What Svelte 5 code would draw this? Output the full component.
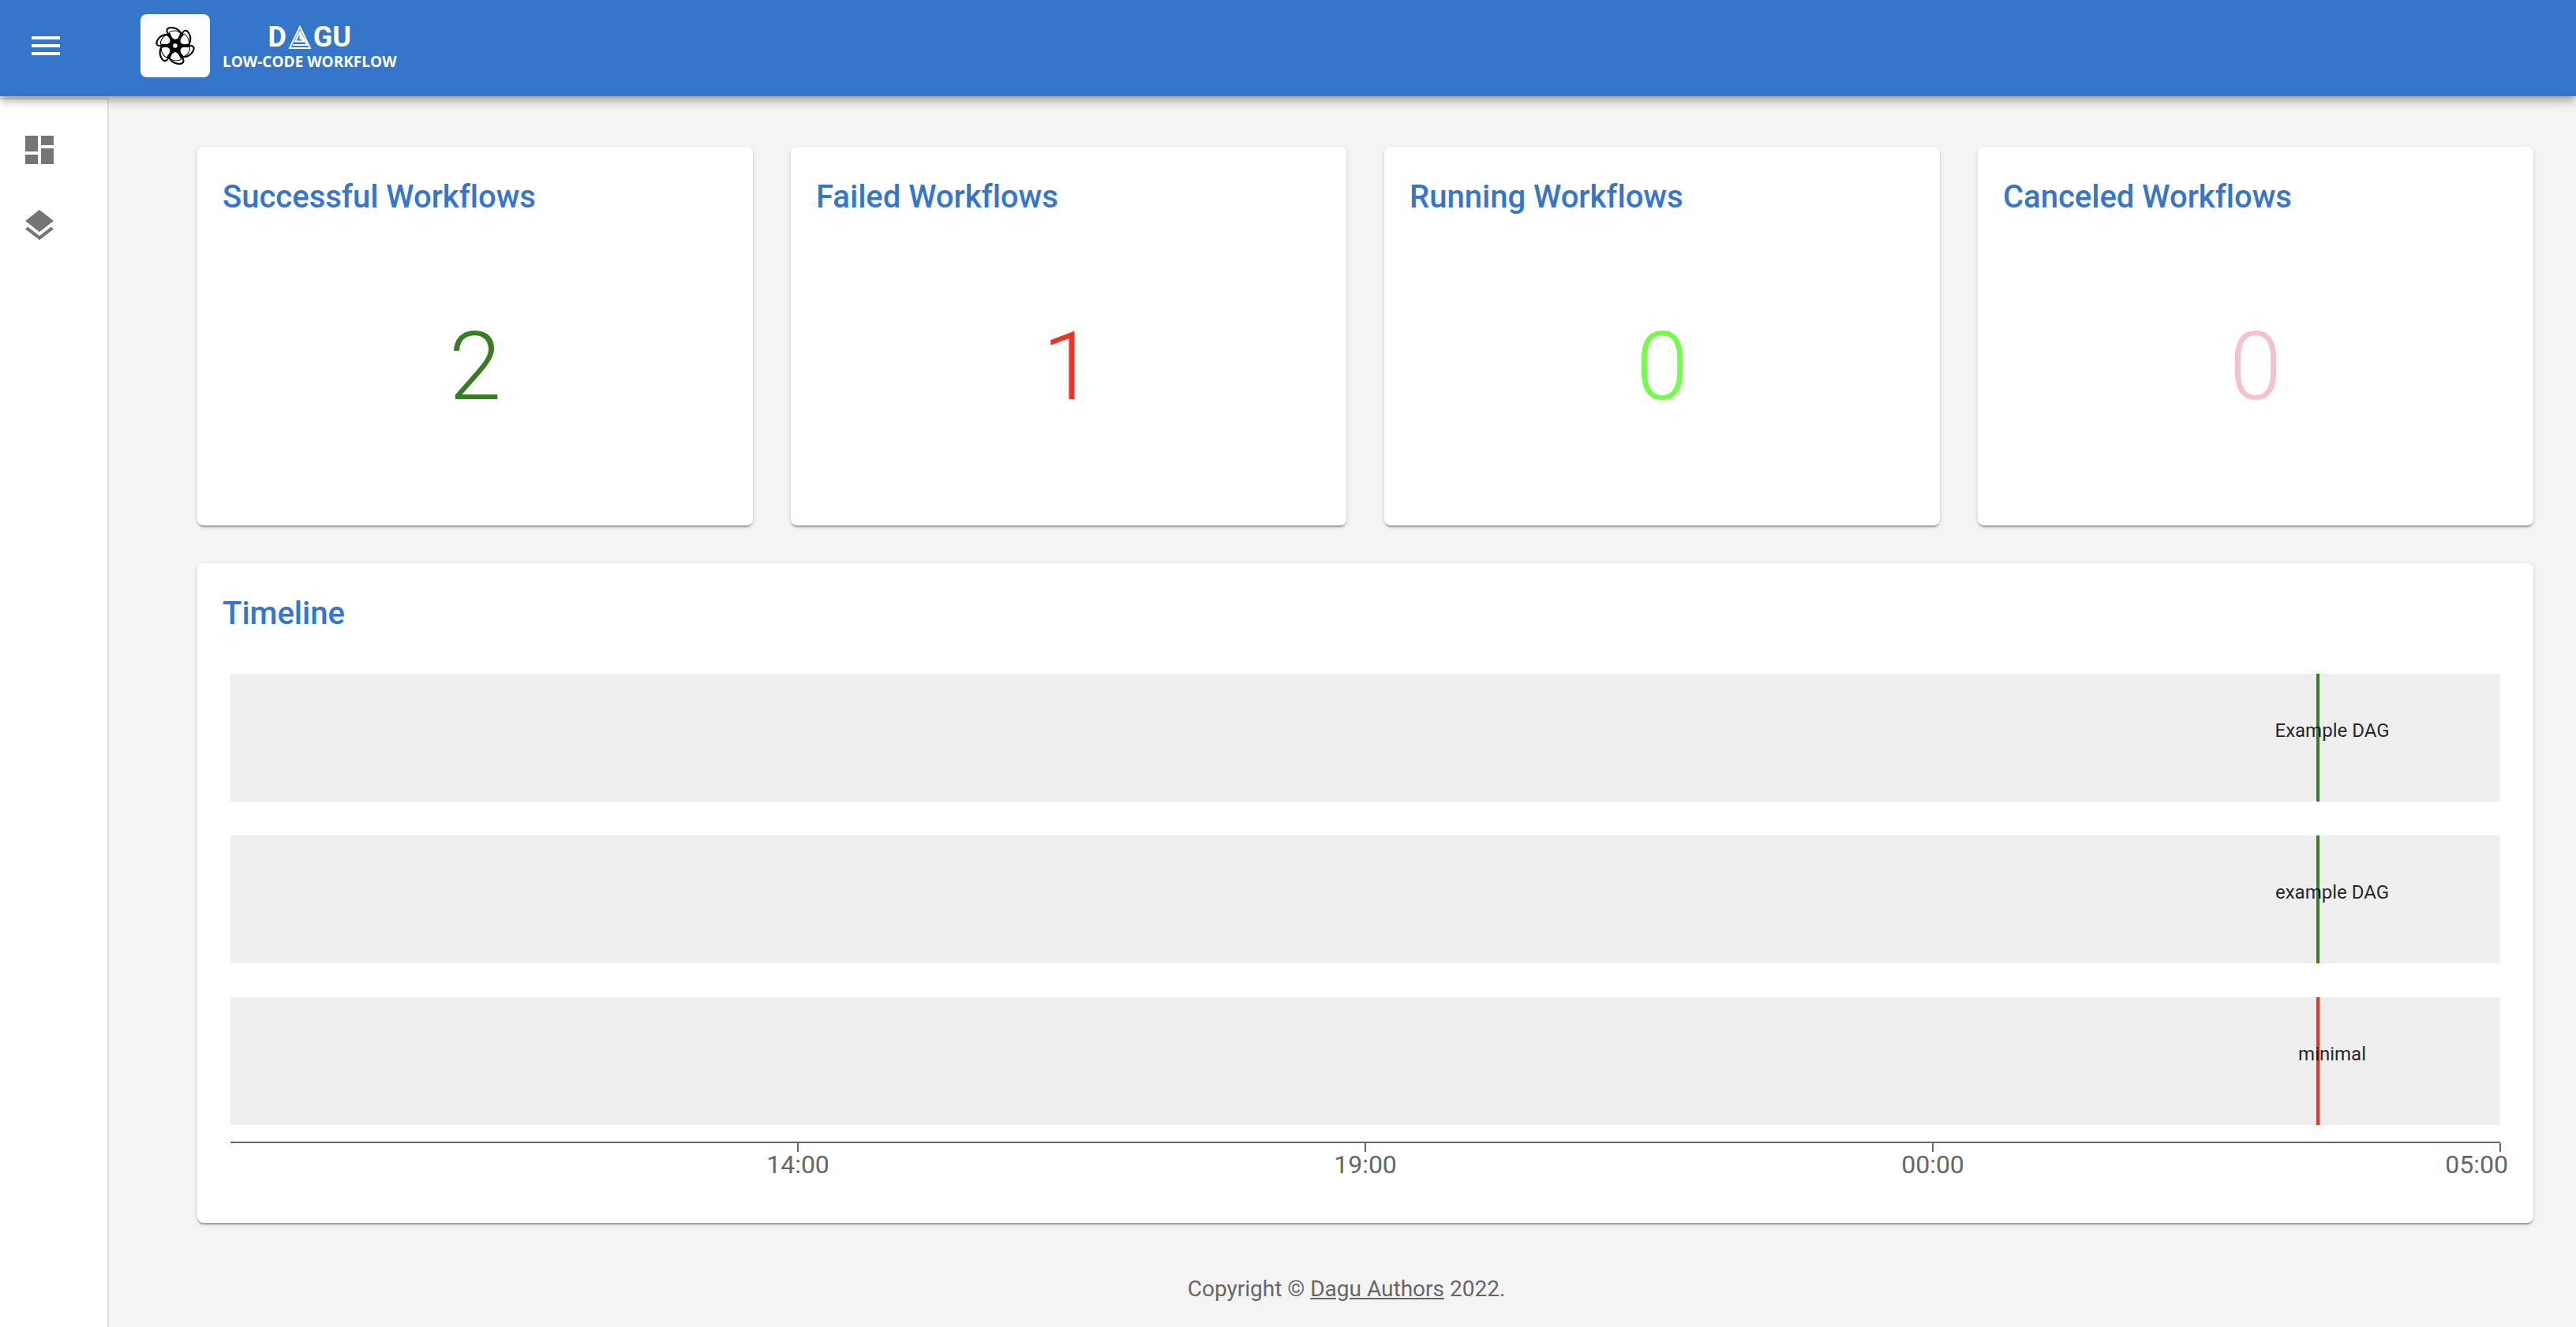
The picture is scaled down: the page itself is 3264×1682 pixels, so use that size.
<script>
  const stats = [
    { title: 'Successful Workflows', value: 2, tone: 'success' },
    { title: 'Failed Workflows', value: 1, tone: 'failed' },
    { title: 'Running Workflows', value: 0, tone: 'running' },
    { title: 'Canceled Workflows', value: 0, tone: 'canceled' }
  ];
  const runs = [
    { name: 'Example DAG', tone: 'success', at: 91.9 },
    { name: 'example DAG', tone: 'success', at: 91.9 },
    { name: 'minimal', tone: 'failed', at: 91.9 }
  ];
  const ticks = ['14:00', '19:00', '00:00', '05:00'];
  const petals = [0, 60, 120, 180, 240, 300];
</script>

<div class="app">
  <header>
    <button class="menu" type="button" aria-label="Toggle menu">
      <svg viewBox="0 0 24 24"><path d="M3 18h18v-2H3v2zm0-5h18v-2H3v2zm0-7v2h18V6H3z" /></svg>
    </button>
    <div class="emblem">
      <svg viewBox="-26 -26 52 52">
        {#each petals as angle}
          <g transform="rotate({angle})">
            <path d="M0 0L-11 -15L-7 -17Q-5 -9 0 -8Q5 -9 6 -16L10 -13Z" />
            <path class="ring" d="M-8 -14C-13 -20 -10 -23 -5 -23C2 -23 8 -18 8 -12" />
            <path class="thin" d="M-8 -17C-3 -20 4 -20 9 -14" />
          </g>
        {/each}
        <circle class="hole" r="2.8" />
      </svg>
    </div>
    <div class="brand">
      <div class="name">
        <span>D</span>
        <svg viewBox="0 0 30 32">
          <path d="M15 3L28 30H2Z" />
          <path d="M6 26H24L15 9.500L9 21.500H19.500L15.500 15V19" />
        </svg>
        <span>GU</span>
      </div>
      <div class="tag">LOW-CODE WORKFLOW</div>
    </div>
  </header>

  <div class="body">
    <nav aria-label="Main">
      <a href="#dashboard" aria-label="Dashboard">
        <svg viewBox="0 0 24 24"><path d="M3 13h8V3H3v10zm0 8h8v-6H3v6zm10 0h8V11h-8v10zm0-18v6h8V3h-8z" /></svg>
      </a>
      <a href="#workflows" aria-label="Workflows">
        <svg viewBox="0 0 24 24"><path d="M11.99 18.54l-7.37-5.73L3 14.07l9 7 9-7-1.63-1.27-7.38 5.74zM12 16l7.36-5.73L21 9l-9-7-9 7 1.63 1.27L12 16z" /></svg>
      </a>
    </nav>

    <main>
      <div class="panels">
        <div class="stats">
          {#each stats as stat}
            <section class="card">
              <h2>{stat.title}</h2>
              <p class="value {stat.tone}">{stat.value}</p>
            </section>
          {/each}
        </div>

        <section class="card">
          <h2>Timeline</h2>
          <div class="chart">
            {#each runs as run}
              <div class="lane">
                <div class="run {run.tone}" style="left: {run.at}%"><span>{run.name}</span></div>
              </div>
            {/each}
            <div class="axis">
              {#each ticks as tick}
                <div class="tick"><span>{tick}</span></div>
              {/each}
            </div>
          </div>
        </section>
      </div>

      <footer>Copyright © <a href="#authors">Dagu Authors</a> 2022.</footer>
    </main>
  </div>
</div>

<style>
  :global(body) {
    margin: 0;
    background: #f4f4f4;
  }
  .app {
    display: flex;
    flex-direction: column;
    min-height: 100vh;
    font-family: Roboto, 'Liberation Sans', sans-serif;
    font-variant-ligatures: none;
    color: rgba(0, 0, 0, 0.87);
  }
  header {
    position: relative;
    z-index: 1;
    display: flex;
    align-items: center;
    box-sizing: border-box;
    height: 122px;
    padding: 0 34px 6px;
    background: #3575ca;
    color: #fff;
    box-shadow:
      0 4px 8px -2px rgba(0, 0, 0, 0.2),
      0 8px 10px 0 rgba(0, 0, 0, 0.14),
      0 2px 20px 0 rgba(0, 0, 0, 0.12);
  }
  svg {
    display: block;
    fill: currentColor;
  }
  .menu {
    padding: 0;
    border: 0;
    background: none;
    color: inherit;
    cursor: pointer;
  }
  .menu svg,
  nav svg {
    width: 48px;
    height: 48px;
  }
  .emblem {
    display: grid;
    place-items: center;
    width: 88px;
    height: 80px;
    margin: 0 16px 0 96px;
    border-radius: 8px;
    background: #fff;
    color: #000;
  }
  .emblem svg {
    width: 52px;
    height: 52px;
  }
  .ring,
  .thin {
    fill: none;
    stroke: currentColor;
    stroke-width: 2;
  }
  .thin {
    stroke-width: 1;
  }
  .hole {
    fill: #fff;
  }
  .brand {
    display: flex;
    flex-direction: column;
    align-items: center;
    padding-top: 2px;
    font-weight: 700;
  }
  .name {
    display: flex;
    align-items: center;
    gap: 2px;
    font-size: 36px;
    line-height: 38px;
  }
  .name svg {
    width: 30px;
    height: 32px;
    fill: none;
    stroke: currentColor;
    stroke-width: 2;
  }
  .tag {
    font-family: 'Open Sans', sans-serif;
    font-size: 19px;
    line-height: 24px;
  }
  .body {
    flex: 1;
    display: flex;
  }
  nav {
    display: flex;
    flex-direction: column;
    gap: 48px;
    flex: none;
    box-sizing: border-box;
    width: 138px;
    margin-top: 2px;
    padding: 40px 26px;
    border-top: 2px solid #e0e0e0;
    border-right: 2px solid #e0e0e0;
    background: #fff;
  }
  nav a {
    width: 48px;
    color: #757575;
  }
  main {
    flex: 1;
    min-width: 0;
    padding: 64px 54px 24px 64px;
  }
  .panels {
    display: grid;
    gap: 48px;
    padding-left: 48px;
  }
  .stats {
    display: grid;
    grid-template-columns: repeat(4, 1fr);
    gap: 48px;
  }
  .card {
    display: flex;
    flex-direction: column;
    padding: 32px;
    border-radius: 8px;
    background: #fff;
    box-shadow:
      0 4px 2px -2px rgba(0, 0, 0, 0.2),
      0 2px 2px 0 rgba(0, 0, 0, 0.14),
      0 2px 6px 0 rgba(0, 0, 0, 0.12);
  }
  .stats .card {
    min-height: 416px;
  }
  h2 {
    margin: 0 0 14px;
    color: #3575ca;
    font-size: 40px;
    font-weight: 500;
    line-height: 64px;
  }
  .value {
    flex: 1;
    display: grid;
    place-items: center;
    margin: 0;
    font-size: 120px;
    font-weight: 300;
    line-height: 144px;
  }
  .value.success { color: #377e22; }
  .value.failed { color: #ea3323; }
  .value.running { color: #75fb4c; }
  .value.canceled { color: #f5c1cb; }
  .chart {
    display: grid;
    gap: 43px;
    padding: 30px 10px 0;
  }
  .lane {
    position: relative;
    height: 162px;
    background: #eee;
  }
  .run {
    position: absolute;
    top: 0;
    bottom: 0;
    display: flex;
    align-items: center;
    justify-content: center;
    width: 4px;
  }
  .run.success { background: #377e22; }
  .run.failed { background: #ea3323; }
  .run span {
    flex: none;
    padding: 0 0 18px 36px;
    font-size: 24px;
    line-height: 28px;
    white-space: nowrap;
  }
  .axis {
    display: grid;
    grid-template-columns: repeat(4, 1fr);
    margin-top: -22px;
    padding-bottom: 26px;
    border-top: 2px solid #666;
    color: #666;
    font-size: 32px;
    line-height: 32px;
  }
  .tick {
    display: flex;
    flex-direction: column;
    align-items: center;
    margin-right: -50%;
    margin-left: 50%;
  }
  .tick::before {
    content: '';
    width: 2px;
    height: 11px;
    background: #666;
  }
  .tick:last-child {
    align-items: flex-end;
    margin-right: -10px;
  }
  .tick:last-child::before {
    margin-right: 9px;
  }
  footer {
    margin-top: 64px;
    color: #666;
    font-size: 28px;
    line-height: 40px;
    text-align: center;
  }
  footer a {
    color: inherit;
  }
</style>
